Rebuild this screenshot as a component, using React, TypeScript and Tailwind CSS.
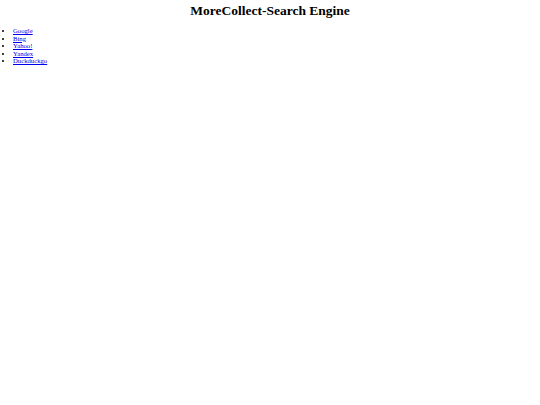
export default function App() {
  const engines = ['Google', 'Bing', 'Yahoo!', 'Yandex', 'Duckduckgo']

  return (
    <div className="min-h-[405px] bg-white px-[3px] pt-[3px] text-black" style={{ fontFamily: '"Liberation Serif", serif' }}>
      <h1 className="my-[0px] text-center text-[13.5px] font-bold leading-[16px]">MoreCollect-Search Engine</h1>
      <ul className="mt-[8px] list-disc pl-[10px] text-[6.7px] leading-[7.5px]">
        {engines.map((name) => (
          <li key={name}>
            <a href="#" className="text-[#0000ee] underline">
              {name}
            </a>
          </li>
        ))}
      </ul>
    </div>
  )
}
